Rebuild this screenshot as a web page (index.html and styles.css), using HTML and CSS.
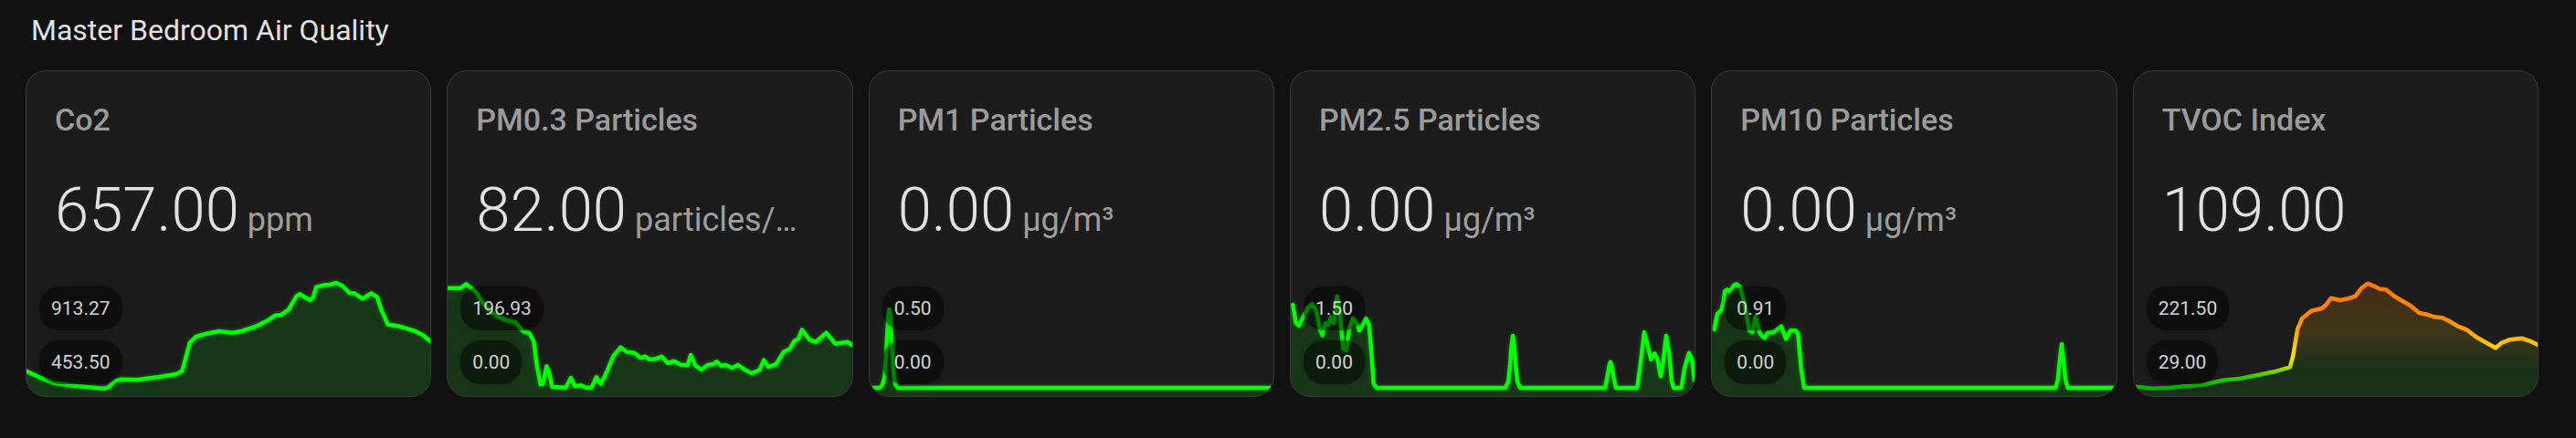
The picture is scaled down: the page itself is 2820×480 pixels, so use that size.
FILE: index.html
```html
<!DOCTYPE html>
<html lang="en">
<head>
    <meta charset="UTF-8">
    <meta name="viewport" content="width=device-width, initial-scale=1.0">
    <title>Master Bedroom Air Quality</title>
    <link rel="stylesheet" href="styles.css">
</head>
<body>
    <div class="stack">
        <div class="stack-title">Master Bedroom Air Quality</div>

        <div class="cards">
            <!-- Co2 -->
            <div class="card">
                <div class="name">Co2</div>
                <div class="state"><span class="value">657.00</span><span class="unit">ppm</span></div>
                <div class="graph">
                    <svg viewBox="0 0 442 140" preserveAspectRatio="none">
                        <path class="fill" d="M0 112.7 L17 120.7 L30.3 126 L57 129.3 L85.3 131.7 L90 130 L97 123.3 L103.7 121.7 L120.3 122.3 L143.7 119.3 L163.7 116 L170.3 112.7 L173.7 100 L178.7 81.7 L185.3 75 L197 71.7 L210.3 69 L225.3 70.7 L233.7 69.3 L250.3 64 L263.7 57.3 L272 51.7 L278.7 51 L287 45 L295.3 30.7 L298.7 28.3 L310.3 35 L313.7 31.7 L317 20.7 L325.3 18.3 L330.3 18.3 L338.7 16 L345.3 19 L353.7 27.3 L358.7 27.3 L367.7 33.3 L377 27.3 L383.7 31.7 L388.7 46.7 L395.3 61.7 L407 63.3 L423.7 68.3 L433.7 73.3 L442 80 L442 140 L0 140 Z"/>
                        <path class="line" d="M0 112.7 L17 120.7 L30.3 126 L57 129.3 L85.3 131.7 L90 130 L97 123.3 L103.7 121.7 L120.3 122.3 L143.7 119.3 L163.7 116 L170.3 112.7 L173.7 100 L178.7 81.7 L185.3 75 L197 71.7 L210.3 69 L225.3 70.7 L233.7 69.3 L250.3 64 L263.7 57.3 L272 51.7 L278.7 51 L287 45 L295.3 30.7 L298.7 28.3 L310.3 35 L313.7 31.7 L317 20.7 L325.3 18.3 L330.3 18.3 L338.7 16 L345.3 19 L353.7 27.3 L358.7 27.3 L367.7 33.3 L377 27.3 L383.7 31.7 L388.7 46.7 L395.3 61.7 L407 63.3 L423.7 68.3 L433.7 73.3 L442 80"/>
                    </svg>
                    <div class="extrema">
                        <span class="bubble">913.27</span>
                        <span class="bubble">453.50</span>
                    </div>
                </div>
            </div>

            <!-- PM0.3 -->
            <div class="card">
                <div class="name">PM0.3 Particles</div>
                <div class="state"><span class="value">82.00</span><span class="unit">particles/cm³</span></div>
                <div class="graph">
                    <svg viewBox="0 0 442 140" preserveAspectRatio="none">
                        <path class="fill" d="M0 21.7 L14.3 21.7 L20.3 17.3 L26 21.7 L31 26 L37.7 36.7 L47.7 48.3 L56 53.3 L64.3 56.7 L74.3 59.3 L82.7 69.3 L89.3 70.7 L94.3 80 L97.7 106.7 L101.7 127.3 L104.3 126.7 L108.3 107.3 L111 113.3 L114.3 130 L129.3 130.7 L135 120 L139.3 129.3 L146 128.3 L151 130.7 L157.7 130.7 L162.7 119.3 L167.7 126.7 L174.3 113.3 L181 96.7 L189.3 86.7 L196 91.7 L204.3 92.7 L211 98.3 L216 96.7 L221 100 L227.7 99.3 L234.3 96.7 L241 104 L247.7 101.7 L256 106 L262.7 106 L266 95 L271 106.7 L277.7 111 L284.3 106 L291 105 L294.3 102.3 L299.3 106.7 L304.3 106 L311 109.3 L317.7 106 L326 111.7 L332.7 115 L341 111.7 L346 100.7 L351 108.3 L359.3 105 L367.7 91.7 L374.3 88.3 L379 80 L383.7 77.3 L387.7 67.3 L396 78.3 L402.7 80.7 L414.3 70.7 L424.3 82.7 L437.7 80.7 L442 84 L442 140 L0 140 Z"/>
                        <path class="line" d="M0 21.7 L14.3 21.7 L20.3 17.3 L26 21.7 L31 26 L37.7 36.7 L47.7 48.3 L56 53.3 L64.3 56.7 L74.3 59.3 L82.7 69.3 L89.3 70.7 L94.3 80 L97.7 106.7 L101.7 127.3 L104.3 126.7 L108.3 107.3 L111 113.3 L114.3 130 L129.3 130.7 L135 120 L139.3 129.3 L146 128.3 L151 130.7 L157.7 130.7 L162.7 119.3 L167.7 126.7 L174.3 113.3 L181 96.7 L189.3 86.7 L196 91.7 L204.3 92.7 L211 98.3 L216 96.7 L221 100 L227.7 99.3 L234.3 96.7 L241 104 L247.7 101.7 L256 106 L262.7 106 L266 95 L271 106.7 L277.7 111 L284.3 106 L291 105 L294.3 102.3 L299.3 106.7 L304.3 106 L311 109.3 L317.7 106 L326 111.7 L332.7 115 L341 111.7 L346 100.7 L351 108.3 L359.3 105 L367.7 91.7 L374.3 88.3 L379 80 L383.7 77.3 L387.7 67.3 L396 78.3 L402.7 80.7 L414.3 70.7 L424.3 82.7 L437.7 80.7 L442 84"/>
                    </svg>
                    <div class="extrema">
                        <span class="bubble">196.93</span>
                        <span class="bubble">0.00</span>
                    </div>
                </div>
            </div>

            <!-- PM1 -->
            <div class="card">
                <div class="name">PM1 Particles</div>
                <div class="state"><span class="value">0.00</span><span class="unit">µg/m³</span></div>
                <div class="graph">
                    <svg viewBox="0 0 442 140" preserveAspectRatio="none">
                        <path class="fill" d="M0 131 L11 131 L14 128 L16.5 118 L18.5 85 L20.3 54 L21.5 45 L22.8 54 L24.5 85 L26.5 118 L28.5 128 L31 131 L442 131 L442 140 L0 140 Z"/>
                        <path class="line" d="M0 131 L11 131 L14 128 L16.5 118 L18.5 85 L20.3 54 L21.5 45 L22.8 54 L24.5 85 L26.5 118 L28.5 128 L31 131 L442 131"/>
                    </svg>
                    <div class="extrema">
                        <span class="bubble">0.50</span>
                        <span class="bubble">0.00</span>
                    </div>
                </div>
            </div>

            <!-- PM2.5 -->
            <div class="card">
                <div class="name">PM2.5 Particles</div>
                <div class="state"><span class="value">0.00</span><span class="unit">µg/m³</span></div>
                <div class="graph">
                    <svg viewBox="0 0 442 140" preserveAspectRatio="none">
                        <path class="fill" d="M2.3 40 L5.7 60 L9 62.7 L13.3 54 L19 43.3 L23.3 39.3 L28 46.7 L32.3 68.3 L34.7 73.3 L38 60 L41.3 61.7 L44 53.3 L47.3 60 L50.7 30.7 L54 50 L57.3 88.3 L60.7 90 L64 66.7 L68 55 L72.3 60 L75 68.3 L78 63.3 L82.3 55 L85.7 61.7 L88.5 95 L90.7 126.7 L94 131 L235 131 L238 124 L240 105 L241.5 85 L243 74 L244.5 85 L246 105 L248 124 L251 131 L344 131 L346.5 118 L348.5 106 L349.7 102.7 L351 106 L353 118 L355.7 131 L379 131 L382.3 106.7 L386.7 70 L390.7 85 L394 100 L398 93.3 L401.3 100 L404.7 118.3 L407.3 103.3 L410.7 74 L414 93.3 L416.7 123.3 L419 131 L427.3 131 L430.7 110 L435.7 92.7 L439 100 L441.7 123.3 L442 140 L0 140 L0 40 Z"/>
                        <path class="line" d="M2.3 40 L5.7 60 L9 62.7 L13.3 54 L19 43.3 L23.3 39.3 L28 46.7 L32.3 68.3 L34.7 73.3 L38 60 L41.3 61.7 L44 53.3 L47.3 60 L50.7 30.7 L54 50 L57.3 88.3 L60.7 90 L64 66.7 L68 55 L72.3 60 L75 68.3 L78 63.3 L82.3 55 L85.7 61.7 L88.5 95 L90.7 126.7 L94 131 L235 131 L238 124 L240 105 L241.5 85 L243 74 L244.5 85 L246 105 L248 124 L251 131 L344 131 L346.5 118 L348.5 106 L349.7 102.7 L351 106 L353 118 L355.7 131 L379 131 L382.3 106.7 L386.7 70 L390.7 85 L394 100 L398 93.3 L401.3 100 L404.7 118.3 L407.3 103.3 L410.7 74 L414 93.3 L416.7 123.3 L419 131 L427.3 131 L430.7 110 L435.7 92.7 L439 100 L441.7 123.3"/>
                    </svg>
                    <div class="extrema">
                        <span class="bubble">1.50</span>
                        <span class="bubble">0.00</span>
                    </div>
                </div>
            </div>

            <!-- PM10 -->
            <div class="card">
                <div class="name">PM10 Particles</div>
                <div class="state"><span class="value">0.00</span><span class="unit">µg/m³</span></div>
                <div class="graph">
                    <svg viewBox="0 0 442 140" preserveAspectRatio="none">
                        <path class="fill" d="M2.7 66.7 L6 50 L10.3 46 L12.7 36.7 L14.3 25 L17 23.3 L19.3 26 L24.3 18.3 L27 17.3 L31 20.7 L36 40 L41 68.3 L44.3 70 L47.7 53.3 L52.7 71.7 L57.7 76.7 L61 70.7 L67.7 70 L76 63.3 L81 77.3 L86 68.3 L91.7 68.3 L94.3 71.7 L97.7 110 L101 131 L376 131 L378.5 122 L380.5 102 L382.7 83.3 L384.8 102 L386.8 122 L389.3 131 L442 131 L442 140 L0 140 L0 70 Z"/>
                        <path class="line" d="M2.7 66.7 L6 50 L10.3 46 L12.7 36.7 L14.3 25 L17 23.3 L19.3 26 L24.3 18.3 L27 17.3 L31 20.7 L36 40 L41 68.3 L44.3 70 L47.7 53.3 L52.7 71.7 L57.7 76.7 L61 70.7 L67.7 70 L76 63.3 L81 77.3 L86 68.3 L91.7 68.3 L94.3 71.7 L97.7 110 L101 131 L376 131 L378.5 122 L380.5 102 L382.7 83.3 L384.8 102 L386.8 122 L389.3 131 L442 131"/>
                    </svg>
                    <div class="extrema">
                        <span class="bubble">0.91</span>
                        <span class="bubble">0.00</span>
                    </div>
                </div>
            </div>

            <!-- TVOC -->
            <div class="card">
                <div class="name">TVOC Index</div>
                <div class="state"><span class="value">109.00</span></div>
                <div class="graph">
                    <svg viewBox="0 0 442 140" preserveAspectRatio="none">
                        <defs>
                            <linearGradient id="tvoc-line" gradientUnits="userSpaceOnUse" x1="0" y1="131" x2="0" y2="16">
                                <stop offset="0" stop-color="#00b800"/>
                                <stop offset="0.1" stop-color="#30c800"/>
                                <stop offset="0.21" stop-color="#b8e000"/>
                                <stop offset="0.3" stop-color="#ffe000"/>
                                <stop offset="0.43" stop-color="#ffc400"/>
                                <stop offset="0.56" stop-color="#ffa000"/>
                                <stop offset="0.7" stop-color="#ff8800"/>
                                <stop offset="1" stop-color="#ff7a00"/>
                            </linearGradient>
                            <linearGradient id="tvoc-fill" gradientUnits="userSpaceOnUse" x1="0" y1="16" x2="0" y2="140">
                                <stop offset="0" stop-color="rgb(255,120,0)" stop-opacity="0.17"/>
                                <stop offset="0.45" stop-color="rgb(255,200,0)" stop-opacity="0.15"/>
                                <stop offset="0.8" stop-color="rgb(0,220,0)" stop-opacity="0.1"/>
                                <stop offset="1" stop-color="rgb(0,255,0)" stop-opacity="0.1"/>
                            </linearGradient>
                        </defs>
                        <path class="fill-tvoc" d="M0 129.5 L4 130 L20.7 131.7 L40.7 130.7 L55.7 129.3 L75.7 127.7 L97.3 122.7 L117.3 120.7 L137.3 116.7 L154 113.3 L170.7 108.3 L174 96.7 L179 66.7 L184 55 L194 46.7 L205.7 44 L210.7 39.3 L215.7 32.7 L225.7 35 L234 33.3 L242.3 30.7 L249 21.7 L255.7 16.7 L262.3 19.3 L269 22.7 L275.7 23.3 L284 30 L292.3 35 L302.3 40.7 L312.3 49 L320.7 50.7 L329 53.3 L337.3 54.3 L345.7 58.3 L354 63.3 L364 67.3 L374 75 L384 80.7 L395.7 87.3 L402.3 81.7 L410.7 78.3 L424 76.7 L434 80 L442 84 L442 140 L0 140 Z"/>
                        <path class="line line-tvoc" d="M0 129.5 L4 130 L20.7 131.7 L40.7 130.7 L55.7 129.3 L75.7 127.7 L97.3 122.7 L117.3 120.7 L137.3 116.7 L154 113.3 L170.7 108.3 L174 96.7 L179 66.7 L184 55 L194 46.7 L205.7 44 L210.7 39.3 L215.7 32.7 L225.7 35 L234 33.3 L242.3 30.7 L249 21.7 L255.7 16.7 L262.3 19.3 L269 22.7 L275.7 23.3 L284 30 L292.3 35 L302.3 40.7 L312.3 49 L320.7 50.7 L329 53.3 L337.3 54.3 L345.7 58.3 L354 63.3 L364 67.3 L374 75 L384 80.7 L395.7 87.3 L402.3 81.7 L410.7 78.3 L424 76.7 L434 80 L442 84"/>
                    </svg>
                    <div class="extrema">
                        <span class="bubble">221.50</span>
                        <span class="bubble">29.00</span>
                    </div>
                </div>
            </div>
        </div>
    </div>
</body>
</html>
```

FILE: styles.css
```css
body {
    background-color: #111111;
    margin: 0;
    font-family: Roboto, "Noto Sans", sans-serif;
    color: #e1e1e1;
}

.stack {
    padding: 14px 41px 0 28px;
}

.stack-title {
    font-size: 32px;
    line-height: 38px;
    padding-left: 6px;
    color: #e1e1e1;
}

.cards {
    display: grid;
    grid-template-columns: repeat(6, 1fr);
    gap: 17px;
    margin-top: 25px;
}

.card {
    background-color: #1c1c1c;
    border: 1px solid #383838;
    border-radius: 22px;
    overflow: hidden;
    display: flex;
    flex-direction: column;
    min-width: 0;
}

.name {
    padding: 33px 31px 0 31px;
    font-size: 34px;
    line-height: 40px;
    font-weight: 500;
    color: #9b9b9b;
    white-space: nowrap;
}

.state {
    display: flex;
    align-items: baseline;
    margin-top: 46px;
    padding: 0 45px 0 31px;
    height: 66px;
    line-height: 66px;
    min-width: 0;
}

.value {
    font-size: 67px;
    font-weight: 300;
    color: #e1e1e1;
    white-space: nowrap;
    flex-shrink: 0;
}

.unit {
    font-size: 36px;
    color: #9e9e9e;
    margin-left: 9px;
    white-space: nowrap;
    overflow: hidden;
    text-overflow: ellipsis;
    min-width: 0;
}

.graph {
    position: relative;
    margin-top: 31px;
    height: 140px;
}

.graph svg {
    display: block;
    width: 100%;
    height: 140px;
}

.fill {
    fill: rgba(0, 255, 0, 0.12);
}

.fill-tvoc {
    fill: url(#tvoc-fill);
}

.line {
    fill: none;
    stroke: #00ff00;
    stroke-width: 4.5;
    stroke-linejoin: round;
    stroke-linecap: round;
    vector-effect: non-scaling-stroke;
    filter: drop-shadow(0 0 2px rgba(0, 255, 0, 0.35));
}

.line-tvoc {
    stroke: url(#tvoc-line);
    filter: none;
}

.extrema {
    position: absolute;
    left: 14px;
    top: 20px;
    display: flex;
    flex-direction: column;
    align-items: flex-start;
    gap: 11px;
}

.bubble {
    padding: 12px 13px;
    font-size: 21px;
    line-height: 24px;
    color: #d2d2d2;
    background-color: rgba(0, 0, 0, 0.5);
    border-radius: 22px;
    box-shadow: 0 0 6px rgba(0, 0, 0, 0.25);
}
```
